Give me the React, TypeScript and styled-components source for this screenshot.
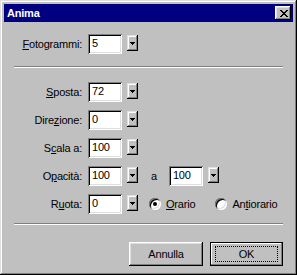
import React from "react";
import styled, { createGlobalStyle } from "styled-components";

const GlobalStyle = createGlobalStyle`
  html, body {
    margin: 0;
    padding: 0;
    background: #c0c0c0;
  }
  * {
    box-sizing: border-box;
  }
`;

export default function App() {
  return (
    <>
      <GlobalStyle />
      <StyledWindow>
        <StyledTitleBar>
          <span>Anima</span>
          <StyledCloseBtn>
            <svg width="8" height="7" viewBox="0 0 8 7">
              <path
                d="M0 0h2v1H0zM6 0h2v1H6zM1 1h2v1H1zM5 1h2v1H5zM2 2h4v1H2zM3 3h2v1H3zM2 4h4v1H2zM1 5h2v1H1zM5 5h2v1H5zM0 6h2v1H0zM6 6h2v1H6z"
                fill="#000"
              />
            </svg>
          </StyledCloseBtn>
        </StyledTitleBar>

        <StyledBody>
          <StyledRow>
            <StyledLabel>
              <Key>F</Key>otogrammi:
            </StyledLabel>
            <Field value="5" />
          </StyledRow>

          <StyledSeparator $top={12} $bottom={14} />

          <StyledForm>
            <StyledRow>
              <StyledLabel>
                <Key>S</Key>posta:
              </StyledLabel>
              <Field value="72" />
            </StyledRow>
            <StyledRow>
              <StyledLabel>
                Dire<Key>z</Key>ione:
              </StyledLabel>
              <Field value="0" />
            </StyledRow>
            <StyledRow>
              <StyledLabel>
                S<Key>c</Key>ala a:
              </StyledLabel>
              <Field value="100" />
            </StyledRow>
            <StyledRow>
              <StyledLabel>
                O<Key>p</Key>acità:
              </StyledLabel>
              <Field value="100" />
              <StyledText $left={13}>a</StyledText>
              <Field value="100" $left={12} />
            </StyledRow>
            <StyledRow>
              <StyledLabel>
                R<Key>u</Key>ota:
              </StyledLabel>
              <Field value="0" />
              <Radio $left={11} checked>
                <Key>O</Key>rario
              </Radio>
              <Radio $left={20}>
                An<Key>t</Key>iorario
              </Radio>
            </StyledRow>
          </StyledForm>

          <StyledSeparator $top={9} $bottom={17} />

          <StyledButtonRow>
            <StyledButton $width={74}>Annulla</StyledButton>
            <StyledButton $width={73} $default>
              <span className="focusRing">OK</span>
            </StyledButton>
          </StyledButtonRow>
        </StyledBody>
      </StyledWindow>
    </>
  );
}

function Field({ value, $left = 0 }: { value: string; $left?: number }) {
  return (
    <StyledField $left={$left}>
      <StyledInput>{value}</StyledInput>
      <StyledDropBtn>
        <svg width="5" height="3" viewBox="0 0 5 3">
          <path d="M0 0h5v1H0zM1 1h3v1H1zM2 2h1v1H2z" fill="#000" />
        </svg>
      </StyledDropBtn>
    </StyledField>
  );
}

function Radio({
  children,
  checked = false,
  $left,
}: {
  children: React.ReactNode;
  checked?: boolean;
  $left: number;
}) {
  return (
    <StyledRadio $left={$left}>
      <StyledRadioCircle $checked={checked} />
      <span>{children}</span>
    </StyledRadio>
  );
}

const font = `
  font-family: "Liberation Sans", Arial, sans-serif;
  font-size: 11px;
  letter-spacing: -0.2px;
  color: #000;
`;

const StyledWindow = styled.div`
  width: 297px;
  height: 275px;
  padding: 4px;
  background: #c0c0c0;
  box-shadow: inset -1px -1px 0 #000, inset 1px 1px 0 #dfdfdf,
    inset -2px -2px 0 #808080, inset 2px 2px 0 #fff;
  display: flex;
  flex-direction: column;
  ${font}
`;

const StyledTitleBar = styled.div`
  height: 18px;
  background: #000080;
  display: flex;
  align-items: center;
  justify-content: space-between;
  padding: 0 2px 0 3px;

  span {
    font-family: "Liberation Sans", Arial, sans-serif;
    font-weight: 700;
    font-size: 11px;
    color: #fff;
  }
`;

const StyledCloseBtn = styled.div`
  width: 16px;
  height: 14px;
  background: #c0c0c0;
  display: flex;
  align-items: center;
  justify-content: center;
  padding-left: 1px;
  box-shadow: inset -1px -1px 0 #000, inset 1px 1px 0 #fff,
    inset -2px -2px 0 #808080, inset 2px 2px 0 #dfdfdf;
`;

const StyledBody = styled.div`
  flex: 1;
  display: flex;
  flex-direction: column;
  padding: 12px 10px 0 6px;
`;

const StyledForm = styled.div`
  display: flex;
  flex-direction: column;
  gap: 8px;
`;

const StyledRow = styled.div`
  height: 20px;
  display: flex;
  align-items: center;
`;

const StyledLabel = styled.label`
  width: 72px;
  margin-right: 6px;
  text-align: right;
  white-space: nowrap;
`;

const Key = styled.u`
  text-decoration: underline;
  text-underline-offset: 1px;
`;

const StyledText = styled.span<{ $left: number }>`
  margin-left: ${(p) => p.$left}px;
`;

const StyledField = styled.div<{ $left: number }>`
  display: flex;
  align-items: flex-start;
  height: 20px;
  margin-left: ${(p) => p.$left}px;
`;

const StyledInput = styled.div`
  width: 34px;
  height: 20px;
  background: #fff;
  padding: 3px 0 0 4px;
  line-height: 13px;
  box-shadow: inset 1px 1px 0 #808080, inset -1px -1px 0 #fff,
    inset 2px 2px 0 #000, inset -2px -2px 0 #dfdfdf;
`;

const StyledDropBtn = styled.div`
  width: 11px;
  height: 16px;
  margin: 1px 0 0 5px;
  background: #c0c0c0;
  display: flex;
  align-items: center;
  justify-content: center;
  box-shadow: inset -1px -1px 0 #000, inset 1px 1px 0 #dfdfdf,
    inset -2px -2px 0 #808080, inset 2px 2px 0 #fff;
`;

const StyledRadio = styled.div<{ $left: number }>`
  display: flex;
  align-items: center;
  gap: 5px;
  margin-left: ${(p) => p.$left}px;
`;

const StyledRadioCircle = styled.div<{ $checked: boolean }>`
  position: relative;
  width: 12px;
  height: 12px;
  border-radius: 50%;
  background: #fff;
  box-shadow: inset 1px 1px 0 #808080, inset -1px -1px 0 #fff,
    inset 2px 2px 0 #000, inset -2px -2px 0 #dfdfdf;

  &::after {
    content: "";
    display: ${(p) => (p.$checked ? "block" : "none")};
    position: absolute;
    left: 4px;
    top: 4px;
    width: 4px;
    height: 4px;
    border-radius: 50%;
    background: #000;
  }
`;

const StyledSeparator = styled.div<{ $top: number; $bottom: number }>`
  height: 2px;
  margin: ${(p) => p.$top}px 0 ${(p) => p.$bottom}px 4px;
  border-top: 1px solid #808080;
  border-bottom: 1px solid #fff;
`;

const StyledButtonRow = styled.div`
  display: flex;
  justify-content: flex-end;
  gap: 7px;
`;

const StyledButton = styled.div<{ $width: number; $default?: boolean }>`
  width: ${(p) => p.$width}px;
  height: 24px;
  display: flex;
  align-items: center;
  justify-content: center;
  background: #c0c0c0;
  box-shadow: ${(p) =>
    p.$default
      ? "inset 0 0 0 1px #000, inset -2px -2px 0 #808080, inset 2px 2px 0 #fff"
      : "inset -1px -1px 0 #000, inset 1px 1px 0 #fff, inset -2px -2px 0 #808080, inset 2px 2px 0 #dfdfdf"};

  .focusRing {
    width: ${(p) => p.$width - 10}px;
    height: 16px;
    border: 1px dotted #000;
    display: flex;
    align-items: center;
    justify-content: center;
  }
`;
